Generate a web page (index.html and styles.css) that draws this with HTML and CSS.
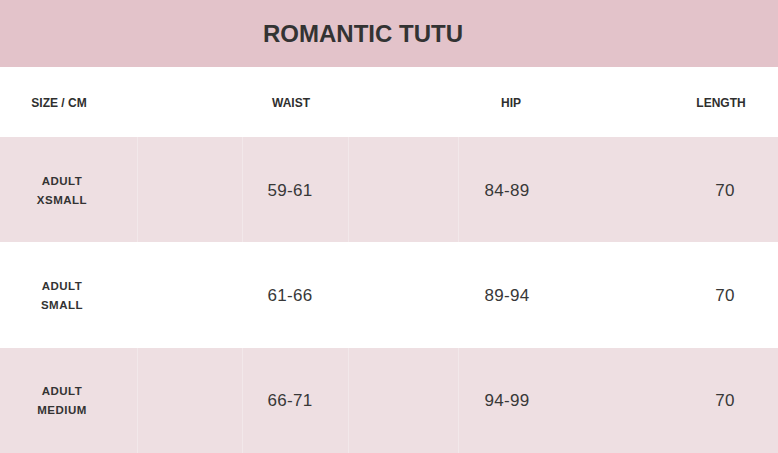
FILE: index.html
```html
<!DOCTYPE html>
<html lang="en">
<head>
<meta charset="utf-8">
<title>Romantic Tutu size chart</title>
<link rel="stylesheet" href="styles.css">
</head>
<body>
<div class="chart">
  <div class="title-band"><h1 class="title">ROMANTIC TUTU</h1></div>
  <div class="row head">
    <div class="cell c1">SIZE / CM</div>
    <div class="cell c2">WAIST</div>
    <div class="cell c3">HIP</div>
    <div class="cell c4">LENGTH</div>
  </div>
  <div class="row data pink">
    <div class="cell c1 size">ADULT<br>XSMALL</div>
    <div class="cell c2 num">59-61</div>
    <div class="cell c3 num">84-89</div>
    <div class="cell c4 num">70</div>
  </div>
  <div class="row data">
    <div class="cell c1 size">ADULT<br>SMALL</div>
    <div class="cell c2 num">61-66</div>
    <div class="cell c3 num">89-94</div>
    <div class="cell c4 num">70</div>
  </div>
  <div class="row data pink">
    <div class="cell c1 size">ADULT<br>MEDIUM</div>
    <div class="cell c2 num">66-71</div>
    <div class="cell c3 num">94-99</div>
    <div class="cell c4 num">70</div>
  </div>
</div>
</body>
</html>
```
FILE: styles.css
```css
* { box-sizing: border-box; }
html, body { margin: 0; padding: 0; background: #ffffff; }
body { font-family: "Liberation Sans", Arial, sans-serif; color: #333333; }

.chart { width: 778px; overflow: hidden; }

.title-band {
  height: 67px;
  background: #e3c3ca;
  display: flex;
  align-items: center;
  justify-content: center;
  padding-right: 52px;
}
.title {
  margin: 0;
  font-size: 24px;
  font-weight: 700;
  color: #333333;
  letter-spacing: 0;
  line-height: 1;
}

.row {
  display: grid;
  grid-template-columns: 120px 55px 232px 204px 57px 110px;
  align-items: center;
}
.row.head { height: 70px; }
.row.data { height: 105.4px; padding-top: 2px; }
.row.pink {
  background-color: #eedfe2;
  background-image:
    linear-gradient(#f2e8ea, #f2e8ea),
    linear-gradient(#f2e8ea, #f2e8ea),
    linear-gradient(#f2e8ea, #f2e8ea),
    linear-gradient(#f2e8ea, #f2e8ea);
  background-size: 1px 100%;
  background-repeat: no-repeat;
  background-position: 137px 0, 242px 0, 348px 0, 458px 0;
}

.cell { text-align: center; white-space: nowrap; }
.c1 { grid-column: 1; }
.c2 { grid-column: 3; }
.c3 { grid-column: 4; }
.c4 { grid-column: 6; }

.head .cell {
  font-size: 12px;
  font-weight: 700;
  color: #2f2f2f;
  padding-top: 1px;
}
.head .c1 { padding-right: 2px; }
.head .c3 { padding-left: 4px; }
.head .c4 { padding-right: 4px; }

.size {
  font-size: 11.5px;
  font-weight: 700;
  line-height: 19px;
  letter-spacing: 0.5px;
  padding-left: 4px;
}
.num {
  font-size: 17px;
  font-weight: 400;
  letter-spacing: 0.3px;
  color: #383838;
}
.num.c2 { padding-right: 2px; }
.num.c3 { padding-right: 4px; }
.num.c4 { padding-left: 4px; }
```
